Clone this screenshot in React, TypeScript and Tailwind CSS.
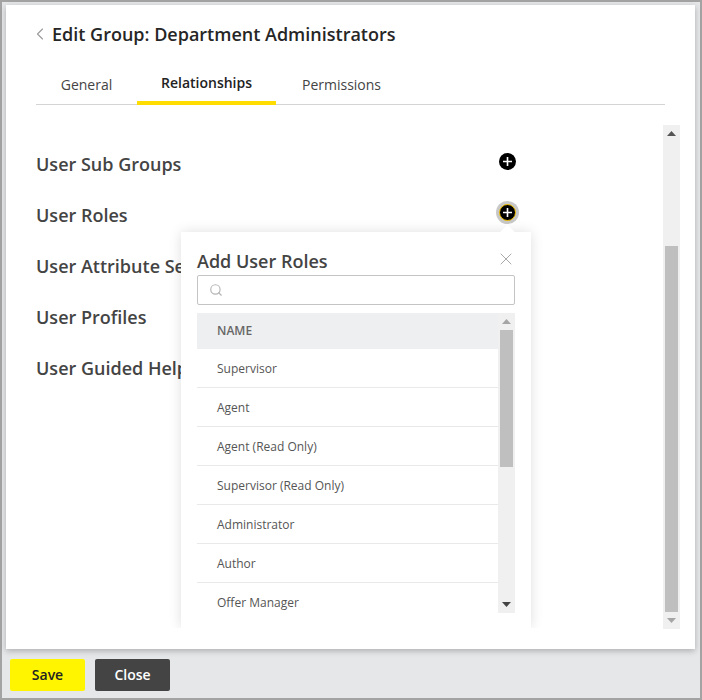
import { Search, X, ChevronLeft } from "lucide-react";

const sections = ["User Sub Groups", "User Roles", "User Attribute Sets", "User Profiles", "User Guided Help"];
const roles = ["Supervisor", "Agent", "Agent (Read Only)", "Supervisor (Read Only)", "Administrator", "Author", "Offer Manager"];

const PlusButton = ({ focused }: { focused?: boolean }) => (
  <div className={focused ? "w-[23px] h-[23px] rounded-full bg-[#c8c8c8] flex items-center justify-center" : "w-[23px] h-[23px] flex items-center justify-center"}>
    <div className={focused ? "w-[17px] h-[17px] rounded-full bg-black border border-[#f5c400] flex items-center justify-center" : "w-[17px] h-[17px] rounded-full bg-black flex items-center justify-center"}>
      <svg width="11" height="11" viewBox="0 0 11 11">
        <path d="M5.5 1v9M1 5.5h9" stroke="#fff" strokeWidth="1.6" />
      </svg>
    </div>
  </div>
);

const Arrow = ({ up, color }: { up?: boolean; color: string }) => (
  <svg width="9" height="5" viewBox="0 0 9 5">
    <path d={up ? "M4.5 0L9 5H0z" : "M0 0h9L4.5 5z"} fill={color} />
  </svg>
);

const App = () => {
  return (
    <div className="w-[702px] h-[700px] border-2 border-[#a3a3a3] bg-[#e6e7e9] flex flex-col text-[#333] font-['Open_Sans',sans-serif]">
      {/* card */}
      <div className="relative mt-[3px] ml-[4px] w-[689px] h-[644px] bg-white shadow-[0_2px_6px_rgba(0,0,0,0.25)] px-[30px] pt-[16px]">
        <div className="flex items-center h-[26px]">
          <ChevronLeft className="w-[20px] h-[20px] text-[#9a9a9a] -ml-[6px] mr-[2px] shrink-0" strokeWidth={1.3} />
          <h1 className="text-[18px] font-semibold text-[#262626] leading-[26px]">Edit Group: Department Administrators</h1>
        </div>

        {/* tabs */}
        <div className="mt-[15px] h-[43px] border-b border-[#d4d4d4] flex text-[14px]">
          <div className="w-[101px] pt-[12px] text-center text-[#444]">General</div>
          <div className="w-[139px] h-[43px] border-b-[4px] border-[#ffdd00] pt-[10px] text-center font-semibold text-[#222]">Relationships</div>
          <div className="w-[131px] pt-[12px] text-center text-[#444]">Permissions</div>
        </div>

        {/* body */}
        <div className="mt-[20px] flex">
          <div className="w-[483px] shrink-0 pt-[16px] flex flex-col">
            {sections.map((s, i) => (
              <div key={s} className="h-[51px] flex justify-between">
                <span className="text-[18px] font-semibold text-[#444] leading-[46px] whitespace-nowrap">{s}</span>
                {i < 2 && (
                  <div className="mt-[9px]">
                    <PlusButton focused={i === 1} />
                  </div>
                )}
              </div>
            ))}
          </div>
          <div className="ml-[144px] w-[17px] h-[504px] shrink-0 bg-[#f0f0f0] flex flex-col items-center">
            <div className="h-[121px] pt-[6px] w-full flex justify-center">
              <Arrow up color="#555" />
            </div>
            <div className="w-[13px] h-[366px] bg-[#bfbfbf]" />
            <div className="pt-[6px]">
              <Arrow color="#a5a5a5" />
            </div>
          </div>
        </div>

        {/* popover */}
        <div className="absolute left-[175px] top-[227px] w-[350px] h-[396px] bg-white shadow-[0_0_12px_rgba(0,0,0,0.13)] [clip-path:inset(-14px_-14px_0_-14px)] px-[16px] pt-[16px]">
          <div className="absolute -top-[5px] left-[321px] w-[11px] h-[11px] rotate-45 bg-white" />
          <div className="flex justify-between items-start h-[27px]">
            <h2 className="text-[18px] font-semibold text-[#444] leading-[26px]">Add User Roles</h2>
            <X className="w-[20px] h-[20px] text-[#a9a9a9] -mr-[1px] mt-[1px]" strokeWidth={1.2} />
          </div>
          <div className="w-[318px] h-[30px] border border-[#c4c4c4] rounded-[2px] flex items-center pl-[11px]">
            <Search className="w-[14px] h-[14px] text-[#b5b5b5]" strokeWidth={2} />
          </div>
          <div className="mt-[8px] w-[318px] h-[300px] flex">
            <div className="w-[301px]">
              <div className="h-[36px] bg-[#eeeff1] pl-[20px] flex items-center text-[12px] font-semibold text-[#666]">NAME</div>
              {roles.map((r, i) => (
                <div key={r} className={i < 6 ? "h-[39px] border-b border-[#e9e9e9] pl-[20px] pt-[2px] flex items-center text-[12px] text-[#555]" : "h-[38px] pl-[20px] pt-[2px] flex items-center text-[12px] text-[#555]"}>
                  {r}
                </div>
              ))}
            </div>
            <div className="w-[17px] h-[300px] bg-[#f0f0f0] flex flex-col items-center">
              <div className="h-[17px] pt-[6px]">
                <Arrow up color="#a5a5a5" />
              </div>
              <div className="w-[13px] h-[137px] bg-[#bfbfbf]" />
              <div className="mt-auto pb-[6px]">
                <Arrow color="#444" />
              </div>
            </div>
          </div>
        </div>
      </div>

      {/* footer */}
      <div className="mt-[10px] ml-[8px] flex gap-[10px] text-[14px] font-semibold">
        <button className="w-[75px] h-[32px] pb-[2px] rounded-[2px] bg-[#fff500] text-[#222]">Save</button>
        <button className="w-[75px] h-[32px] pb-[2px] rounded-[2px] bg-[#444444] text-white">Close</button>
      </div>
    </div>
  );
};

export default App;
